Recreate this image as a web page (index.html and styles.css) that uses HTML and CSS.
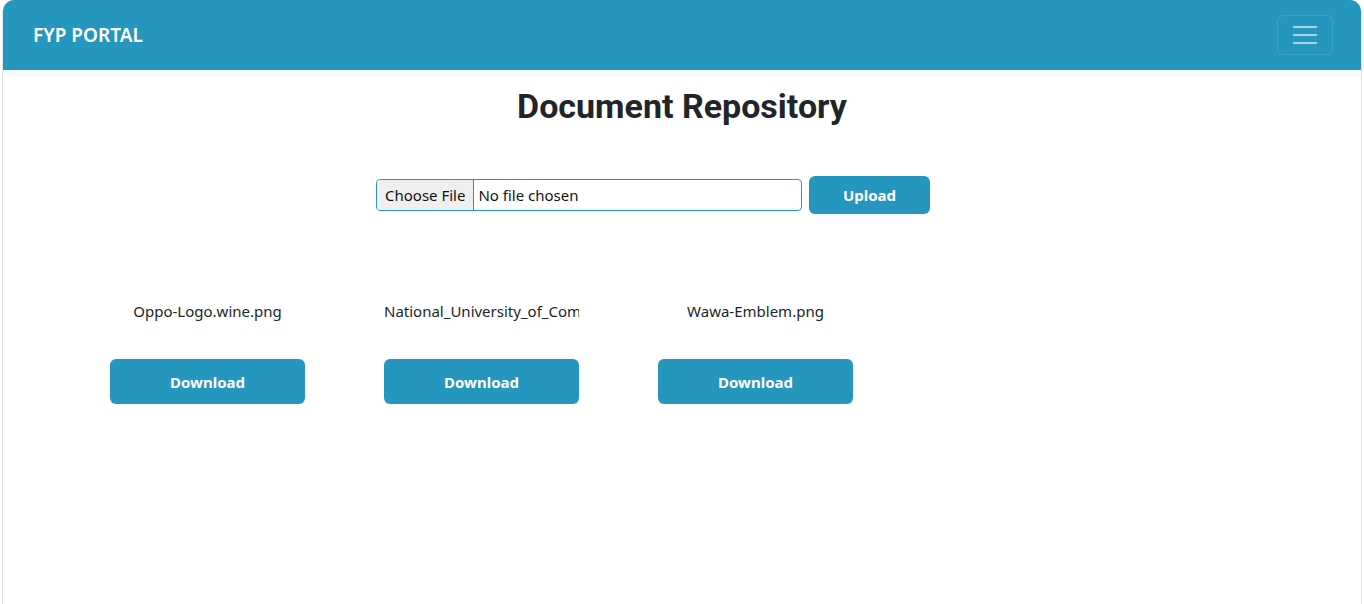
FILE: index.html
```html
<!DOCTYPE html>
<html>
<head>
<meta charset="utf-8">
<link rel="stylesheet" href="styles.css">
</head>
<body>
<div class="frame">
  <nav class="navbar">
    <span class="brand">FYP PORTAL</span>
    <button class="toggler" aria-label="menu">
      <svg width="26" height="20" viewBox="0 0 26 20"><path d="M1 2h24M1 10h24M1 18h24" stroke="rgba(255,255,255,0.6)" stroke-width="2"/></svg>
    </button>
  </nav>
  <div class="strip"></div>
  <main class="main">
    <h1 class="title">Document Repository</h1>
    <form class="upload">
      <div class="file-input"><span class="choose">Choose File</span><span class="nofile">No file chosen</span></div>
      <button type="button" class="btn upload-btn">Upload</button>
    </form>
    <div class="files">
      <div class="file-card">
        <div class="name">Oppo-Logo.wine.png</div>
        <button type="button" class="btn dl">Download</button>
      </div>
      <div class="file-card">
        <div class="name" title="National_University_of_Computer_and_Emerging_Sciences_logo.png">National_University_of_Com</div>
        <button type="button" class="btn dl">Download</button>
      </div>
      <div class="file-card">
        <div class="name">Wawa-Emblem.png</div>
        <button type="button" class="btn dl">Download</button>
      </div>
    </div>
  </main>
</div>
</body>
</html>
```
FILE: styles.css
```css
html, body { margin: 0; padding: 0; background: #fff; }
body { font-family: "Noto Sans", "Open Sans", sans-serif; color: #212529; }
.frame {
  margin-left: 2px;
  width: 1360px;
  min-height: 620px;
  box-sizing: border-box;
  border: 1px solid #e3e3e3;
  border-top: none;
  border-radius: 12px 12px 0 0;
  overflow: hidden;
}
.navbar {
  height: 70px;
  background: #2596be;
  display: flex;
  align-items: center;
  justify-content: space-between;
  padding: 0 28px 0 30px;
  box-sizing: border-box;
}
.brand { color: #fff; font-size: 19px; font-weight: 600; }
.toggler {
  width: 56px; height: 40px;
  background: transparent;
  border: 1px solid rgba(255,255,255,0.12);
  border-radius: 6px;
  display: flex; align-items: center; justify-content: center;
  padding: 0;
  margin-top: -1px;
}
.strip { height: 7px; background: #f8f9fa; }
.main { padding-top: 9px; }
.title {
  margin: 0;
  text-align: center;
  font-family: "Roboto", "Liberation Sans", sans-serif;
  font-weight: 700;
  font-size: 34px;
  line-height: 40px;
}
.upload {
  margin-top: 50px;
  display: flex;
  justify-content: center;
  align-items: center;
  gap: 7px;
  padding-right: 58px;
}
.file-input {
  width: 426px; height: 32px;
  box-sizing: border-box;
  border: 1px solid #2596be;
  border-radius: 4px;
  display: flex; align-items: stretch;
  font-size: 15px;
  overflow: hidden;
}
.choose {
  background: #efefef;
  border-right: 1px solid #767676;
  padding: 0 8px;
  display: flex; align-items: center;
  color: #111;
}
.nofile { display: flex; align-items: center; padding-left: 4px; color: #111; }
.btn {
  background: #2596be;
  color: #fff;
  border: none;
  font-family: "Noto Sans", "Open Sans", sans-serif;
  font-weight: 700;
  font-size: 15px;
  border-radius: 6px;
  cursor: pointer;
}
.upload-btn { width: 121px; height: 38px; }
.files {
  display: flex;
  gap: 79px;
  padding-left: 107px;
  margin-top: 85px;
}
.file-card { width: 195px; display: flex; flex-direction: column; }
.name {
  text-align: center;
  font-size: 15px;
  line-height: 24px;
  white-space: nowrap;
  overflow: hidden;
}
.dl { margin-top: 36px; width: 195px; height: 45px; }
```
